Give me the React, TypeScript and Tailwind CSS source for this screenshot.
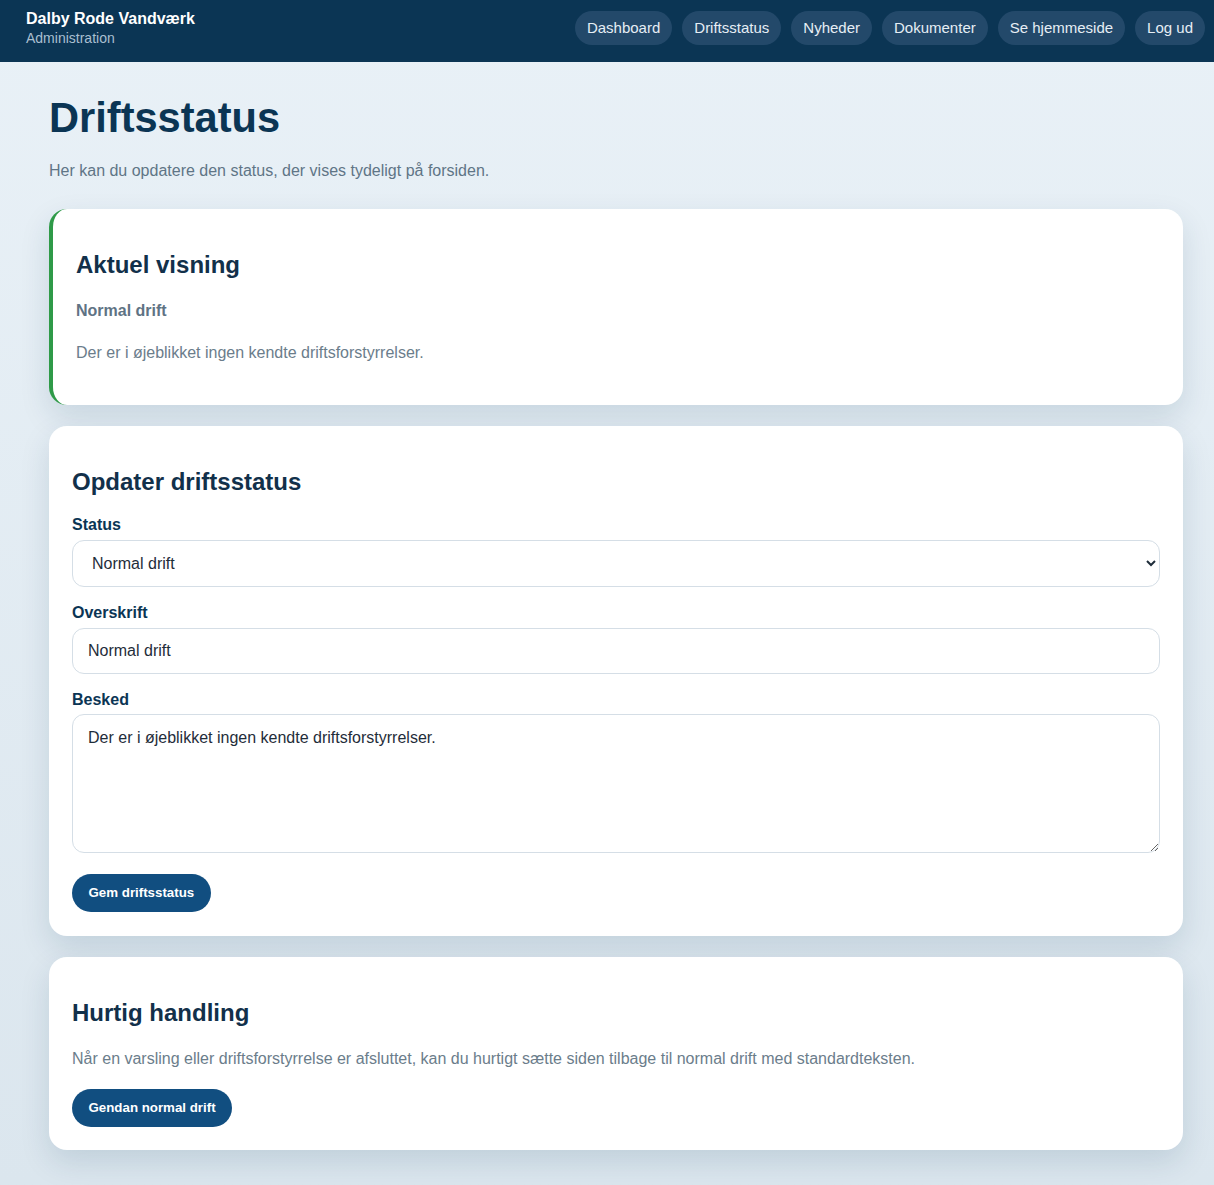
import React from "react";

const navItems = ["Dashboard", "Driftsstatus", "Nyheder", "Dokumenter", "Se hjemmeside", "Log ud"];

export default function App() {
  return (
    <div
      className="min-h-[1185px] bg-gradient-to-b from-[#e9f1f7] to-[#dbe6ee] text-[#0b3554]"
      style={{ fontFamily: '"Liberation Sans", Arial, sans-serif' }}
    >
      <header className="h-[62px] bg-[#0b3554] flex items-center justify-between pl-[26px] pr-[9px]">
        <div className="flex flex-col -mt-[6px]">
          <span className="text-white font-bold text-[16px] leading-[20px]">Dalby Rode Vandværk</span>
          <span className="text-[#a9bfd0] text-[14px] leading-[18px]">Administration</span>
        </div>
        <nav className="flex items-center gap-[10px] -mt-[6px]">
          {navItems.map((item) => (
            <a
              key={item}
              href="#"
              className="h-[34px] px-[12px] rounded-full bg-[#23496a] text-[#e6eef5] text-[15px] flex items-center"
            >
              {item}
            </a>
          ))}
        </nav>
      </header>

      <main className="pl-[49px] pt-[31px] pb-[35px]">
        <h1 className="text-[41.6px] leading-[50px] font-bold text-[#0b3554]">Driftsstatus</h1>
        <p className="mt-[16px] text-[16px] leading-[24px] text-[#5f7586]">
          Her kan du opdatere den status, der vises tydeligt på forsiden.
        </p>

        <div className="mt-[26px] w-[1134px] flex flex-col gap-[21px]">
          <section className="bg-white rounded-[18px] border-l-[4px] border-[#2f9a48] shadow-[0_12px_30px_rgba(11,53,84,0.13)] pl-[23px] pr-[24px] pt-[41px] pb-[40px]">
            <h2 className="text-[24px] leading-[30px] font-bold text-[#12304a]">Aktuel visning</h2>
            <p className="mt-[19px] text-[16px] leading-[24px] font-bold text-[#5f7384]">Normal drift</p>
            <p className="mt-[18px] text-[16px] leading-[24px] text-[#6b7d8b]">
              Der er i øjeblikket ingen kendte driftsforstyrrelser.
            </p>
          </section>

          <section className="bg-white rounded-[18px] shadow-[0_12px_30px_rgba(11,53,84,0.13)] px-[23px] pt-[41px] pb-[24px]">
            <h2 className="text-[24px] leading-[30px] font-bold text-[#12304a]">Opdater driftsstatus</h2>
            <label className="block mt-[16px] text-[16px] leading-[24px] font-bold text-[#0b3554]">Status</label>
            <select
              defaultValue="normal"
              className="mt-[3px] block w-full h-[47px] pl-[15px] pr-[16px] rounded-[12px] border border-[#d5dee6] bg-white text-[16px] text-[#1f2d3a]"
            >
              <option value="normal">Normal drift</option>
              <option value="varsling">Varsling</option>
              <option value="forstyrrelse">Driftsforstyrrelse</option>
            </select>
            <label className="block mt-[14px] text-[16px] leading-[24px] font-bold text-[#0b3554]">Overskrift</label>
            <input
              defaultValue="Normal drift"
              className="mt-[3px] block w-full h-[46px] px-[15px] rounded-[12px] border border-[#d5dee6] bg-white text-[16px] text-[#1f2d3a]"
            />
            <label className="block mt-[14px] text-[16px] leading-[24px] font-bold text-[#0b3554]">Besked</label>
            <textarea
              defaultValue="Der er i øjeblikket ingen kendte driftsforstyrrelser."
              className="mt-[2px] block w-full h-[139px] px-[15px] py-[12px] rounded-[12px] border border-[#d5dee6] bg-white text-[16px] leading-[22px] text-[#1f2d3a]"
            />
            <button className="mt-[21px] h-[38px] px-[16.5px] rounded-full bg-[#114e80] text-white text-[13.3px] font-bold">
              Gem driftsstatus
            </button>
          </section>

          <section className="bg-white rounded-[18px] shadow-[0_12px_30px_rgba(11,53,84,0.13)] px-[23px] pt-[41px] pb-[23px]">
            <h2 className="text-[24px] leading-[30px] font-bold text-[#12304a]">Hurtig handling</h2>
            <p className="mt-[19px] text-[16px] leading-[24px] text-[#6b7d8b]">
              Når en varsling eller driftsforstyrrelse er afsluttet, kan du hurtigt sætte siden tilbage til normal drift med standardteksten.
            </p>
            <button className="mt-[18px] h-[38px] px-[16.5px] rounded-full bg-[#114e80] text-white text-[13.3px] font-bold">
              Gendan normal drift
            </button>
          </section>
        </div>
      </main>
    </div>
  );
}
